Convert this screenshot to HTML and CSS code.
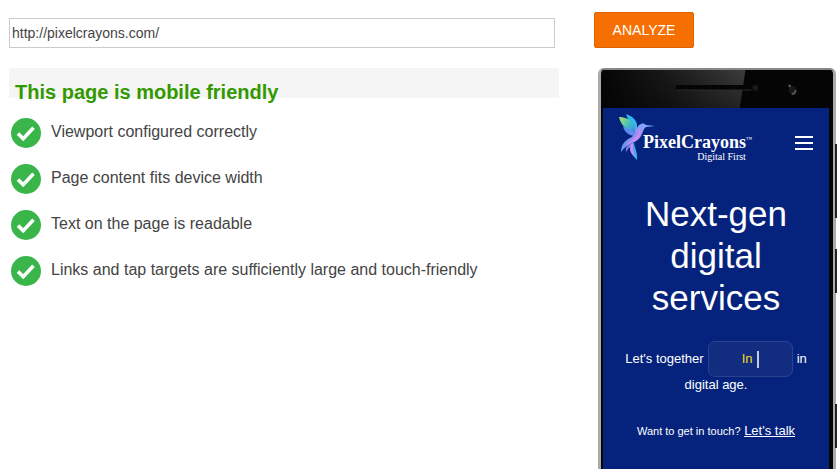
FILE: index.html
```
<!DOCTYPE html>
<html lang="en">
  <head>
    <meta charset="UTF-8" />
    <meta name="viewport" content="width=device-width, initial-scale=1.0" />
    <title>Mobile friendly test</title>
    <link rel="stylesheet" href="styles.css">
  </head>
  <body>
    <!-- shared tick icon -->
    <svg class="symbols" width="0" height="0" aria-hidden="true">
      <symbol id="tick" viewBox="0 0 30 30">
        <circle cx="15" cy="15" r="15" fill="#39b54a" />
        <path d="M7 15.5l5.2 5.2 10.3-10.9" fill="none" stroke="#fff" stroke-width="3.6" />
      </symbol>
    </svg>

    <main class="page">
      <!-- url form -->
      <form class="url-form">
        <input type="text" class="url-input" aria-label="Page address" value="http://pixelcrayons.com/" />
        <button type="button" class="analyze-btn">ANALYZE</button>
      </form>

      <!-- results -->
      <section class="results">
        <h2 class="verdict">This page is mobile friendly</h2>
        <ul class="checks">
          <li><svg class="tick"><use href="#tick" /></svg><span>Viewport configured correctly</span></li>
          <li><svg class="tick"><use href="#tick" /></svg><span>Page content fits device width</span></li>
          <li><svg class="tick"><use href="#tick" /></svg><span>Text on the page is readable</span></li>
          <li><svg class="tick"><use href="#tick" /></svg><span>Links and tap targets are sufficiently large and touch-friendly</span></li>
        </ul>
      </section>

      <!-- phone preview -->
      <section class="phone">
        <div class="phone-top">
          <svg viewBox="0 0 230 38" preserveAspectRatio="none">
            <defs>
              <linearGradient id="shine" x1="0" x2="1">
                <stop offset="0" stop-color="#060606" />
                <stop offset="0.45" stop-color="#191919" />
                <stop offset="1" stop-color="#3c3c3c" />
              </linearGradient>
              <linearGradient id="shade" x1="0" y1="0" x2="0" y2="1">
                <stop offset="0" stop-color="#000" stop-opacity="0" />
                <stop offset="1" stop-color="#000" stop-opacity="0.4" />
              </linearGradient>
            </defs>
            <path d="M0 0h145l-6 38H0z" fill="url(#shine)" />
            <path d="M0 0h145l-6 38H0z" fill="url(#shade)" />
            <rect x="74" y="15" width="83" height="5" rx="1" fill="#050505" />
            <path d="M75 20h76" stroke="#2b2b2b" />
            <circle cx="155" cy="18" r="3" fill="#191919" />
            <circle cx="193" cy="20" r="4" fill="#171717" />
            <circle cx="190" cy="16" r="1.4" fill="#555" />
            <path d="M192 24c3 0 4-1 4-4" fill="none" stroke="#555" stroke-width="2" />
          </svg>
        </div>
        <div class="screen">
          <header class="site-header">
            <a href="#" class="logo">
              <svg class="bird" viewBox="0 0 36 46" aria-hidden="true">
                <defs>
                  <linearGradient id="body" x1="1" y1="0" x2="0" y2="1">
                    <stop offset="0" stop-color="#69b9ff" />
                    <stop offset="0.45" stop-color="#a889ef" />
                    <stop offset="1" stop-color="#4f9df0" />
                  </linearGradient>
                  <linearGradient id="wing" x1="0" y1="0" x2="1" y2="1">
                    <stop offset="0" stop-color="#b4e85e" />
                    <stop offset="0.5" stop-color="#45bfc0" />
                    <stop offset="1" stop-color="#4b78ee" />
                  </linearGradient>
                </defs>
                <!-- wings -->
                <path d="M7 0c8 3 12 7 11 15l-2 5C14 12 9 7 7 0z" fill="#2eb8ef" />
                <path d="M0 3c9 0 15 5 16 12v5C7 17 2 11 0 3z" fill="url(#wing)" />
                <path d="M4 13c5 1 9 3 12 7l-1 2C9 21 6 18 4 13z" fill="#5b8cf0" />
                <!-- body and beak -->
                <path d="M15 21c2-5 3-9 7-11 2-1 4 0 5 1l9 1-9 1c-3 2-3 6-5 9-3 5-7 6-11 8-3 2-6 4-9 8 0-8 5-12 9-14 2-1 3-2 4-3z" fill="url(#body)" />
                <path d="M19 14c2 3 1 7-3 10-3 2-7 4-9 8 4-3 10-4 13-8 3-4 2-8-1-10z" fill="#c88df0" />
                <!-- tail -->
                <path d="M14 28c-5 3-8 5-7 10 2-4 6-6 8-9z" fill="#8a78ee" />
                <path d="M13 29c-3 5-2 10 5 17 1-7-2-11-3-17z" fill="#3aaef0" />
                <path d="M12 30c-2 5-1 9 4 13-2-5-2-9-2-13z" fill="#c78df3" />
              </svg>
              <span class="logo-text">
                <span class="logo-name">PixelCrayons<span class="tm">™</span></span>
                <span class="logo-tag">Digital First</span>
              </span>
            </a>
            <button type="button" class="menu-btn" aria-label="Menu"><i></i><i></i><i></i></button>
          </header>
          <h1 class="hero">Next-gen digital services</h1>
          <p class="pitch">
            <span>Let's together</span>
            <span class="typed">In <i class="caret"></i></span>
            <span>in</span>
            <span>digital age.</span>
          </p>
          <p class="contact"><span>Want to get in touch?</span> <a href="#">Let's talk</a></p>
        </div>
        <span class="side-key key-power"></span>
        <span class="side-key key-volume"></span>
        <span class="side-key key-camera"></span>
      </section>
    </main>
  </body>
</html>
```
FILE: styles.css
```
* {
  box-sizing: border-box;
}

body {
  margin: 0;
  background-color: #fff;
  color: #444;
  font-family: "Liberation Sans", Arial, sans-serif;
}

.symbols {
  display: none;
}

.page {
  min-height: 100vh;
  padding: 12px 0 0 9px;
  display: grid;
  grid-template-columns: minmax(0, 1fr) 245px;
  grid-template-rows: auto 1fr;
  gap: 20px 35px;
}

/* url form */

.url-form {
  grid-column: 1 / -1;
  display: flex;
  align-items: flex-end;
  gap: 39px;
  margin-right: 145px;
}

.url-input {
  flex: 1;
  min-width: 0;
  height: 30px;
  padding: 0 2px;
  border: 1px solid #ccc;
  border-radius: 0;
  color: #444;
  font: 14px "Liberation Sans", Arial, sans-serif;
}

.analyze-btn {
  width: 100px;
  height: 36px;
  padding: 0;
  border: 1px solid #e06500;
  border-radius: 2px;
  background-color: #f56f02;
  color: #fff;
  font: 14px "Liberation Sans", Arial, sans-serif;
  cursor: pointer;
}

/* results */

.verdict {
  height: 30px;
  margin: 0;
  padding: 12px 6px 0;
  background-color: #f5f5f5;
  color: #390;
  font-size: 20px;
  line-height: 24px;
}

.checks {
  margin: 0;
  padding: 20px 2px 0;
  list-style: none;
}

.checks li {
  display: flex;
  gap: 10px;
  height: 46px;
  font-size: 16px;
  line-height: 28px;
}

.tick {
  width: 30px;
  height: 30px;
}

/* phone */

.phone {
  position: relative;
  display: flex;
  flex-direction: column;
  margin: 0 3px 0 4px;
  padding: 0 4px 0 2px;
  border: 3px solid #aaa;
  border-top: 2px solid #888;
  border-bottom: 0;
  border-radius: 6px 6px 0 0;
  background-color: #050505;
}

.phone-top {
  height: 38px;
}

.phone-top svg {
  display: block;
  width: 100%;
  height: 100%;
}

.screen {
  flex: 1;
  padding: 6px 16px 0;
  background-color: #05237d;
  color: #fff;
  text-align: center;
}

.site-header {
  display: flex;
  justify-content: space-between;
  align-items: flex-start;
}

.logo {
  display: flex;
  color: #fff;
  font-family: "Liberation Serif", "Times New Roman", serif;
  text-decoration: none;
}

.bird {
  width: 36px;
  height: 46px;
  margin-right: -12px;
}

.logo-text {
  display: flex;
  flex-direction: column;
  padding-top: 19px;
}

.logo-name {
  display: flex;
  font-size: 18px;
  font-weight: bold;
  line-height: 18px;
}

.tm {
  font-size: 6px;
  font-weight: normal;
  line-height: 12px;
}

.logo-tag {
  padding-right: 6px;
  font-size: 10px;
  line-height: 12px;
  text-align: right;
}

.menu-btn {
  display: flex;
  flex-direction: column;
  gap: 4px;
  margin-top: 22px;
  padding: 0;
  border: none;
  background: none;
  cursor: pointer;
}

.menu-btn i {
  width: 18px;
  height: 2px;
  background-color: #fff;
}

.hero {
  margin: 30px 0 0;
  padding: 0 20px;
  font-size: 35px;
  font-weight: normal;
  line-height: 42px;
}

.pitch {
  display: flex;
  flex-wrap: wrap;
  justify-content: center;
  align-items: center;
  column-gap: 4px;
  margin: 22px 0 0;
  font-size: 13px;
  line-height: 16px;
}

.typed {
  display: flex;
  justify-content: center;
  align-items: center;
  gap: 4px;
  width: 85px;
  height: 36px;
  border: 1px solid #2a438f;
  border-radius: 7px;
  background-color: #122c80;
  color: #f0dc1e;
}

.caret {
  width: 2px;
  height: 17px;
  background-color: #c5cbe0;
}

.contact {
  margin: 30px 0 0;
  font-size: 13px;
  line-height: 16px;
}

.contact span {
  font-size: 11px;
}

.contact a {
  color: #fff;
}

.side-key {
  position: absolute;
  right: -4px;
  width: 2px;
  height: 44px;
  background-color: #222;
}

.key-power {
  top: 74px;
  height: 74px;
}

.key-volume {
  top: 179px;
}

.key-camera {
  top: 334px;
}
```
